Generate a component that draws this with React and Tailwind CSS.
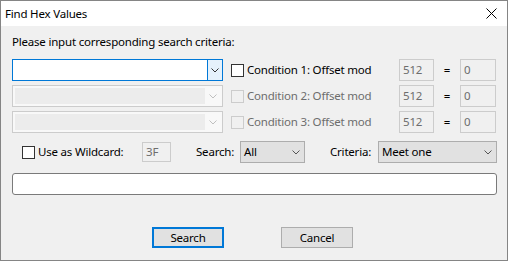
import React from 'react';

function Chevron({ color = '#333333' }) {
    return (
        <svg width="8" height="5" viewBox="0 0 8 5" fill="none">
            <polyline points="0.5,0.5 4,4 7.5,0.5" stroke={color} strokeWidth="1" />
        </svg>
    );
}

function Combo({ enabled }) {
    if (enabled) {
        return (
            <div className="flex h-[22px] w-[211px] border border-[#0078d7] bg-white">
                <div className="flex-1" />
                <div className="flex w-[15px] items-center justify-center border-l border-[#0078d7] bg-[#e5f1fb]">
                    <Chevron color="#333333" />
                </div>
            </div>
        );
    }
    return (
        <div className="flex h-[22px] w-[211px] border border-[#cccccc] bg-[#f8f8f8] p-[2px]">
            <div className="w-[190px] bg-[#ececec]" />
            <div className="flex flex-1 items-center justify-center">
                <Chevron color="#bfbfbf" />
            </div>
        </div>
    );
}

function Checkbox({ enabled }) {
    return (
        <div
            className={`h-[13px] w-[13px] border ${
                enabled ? 'border-[#333333] bg-white' : 'border-[#cccccc] bg-[#f0f0f0]'
            }`}
        />
    );
}

function ValueBox({ value, width }) {
    return (
        <div className={`flex h-[22px] ${width} items-center border border-[#cccccc] bg-[#f0f0f0] pl-[3px] text-[#6d6d6d]`}>
            {value}
        </div>
    );
}

function ConditionRow({ index, enabled }) {
    return (
        <div className="flex h-[22px] items-center">
            <Combo enabled={enabled} />
            <div className="ml-[8px]">
                <Checkbox enabled={enabled} />
            </div>
            <span className={`ml-[3px] w-[152px] ${enabled ? 'text-black' : 'text-[#6d6d6d]'}`}>
                Condition {index}: Offset mod
            </span>
            <ValueBox value="512" width="w-[35px]" />
            <span className="w-[26px] text-center text-black">=</span>
            <ValueBox value="0" width="w-[36px]" />
        </div>
    );
}

function Select({ value, width }) {
    return (
        <div className={`flex h-[22px] ${width} items-center border border-[#adadad] bg-[#e1e1e1] pl-[3px] pr-[4px]`}>
            <span className="flex-1">{value}</span>
            <Chevron color="#555555" />
        </div>
    );
}

export default function App() {
    return (
        <div className="flex h-[261px] w-[508px] flex-col border border-[#858585] font-['Noto_Sans',sans-serif] text-[11.5px] leading-[16px] tracking-[-0.2px] text-black">
            <div className="flex h-[25px] items-center bg-white pl-[4px] pr-[10px]">
                <span className="flex-1">Find Hex Values</span>
                <svg width="11" height="11" viewBox="0 0 11 11">
                    <line x1="0.5" y1="0.5" x2="10.5" y2="10.5" stroke="#000" strokeWidth="1" />
                    <line x1="10.5" y1="0.5" x2="0.5" y2="10.5" stroke="#000" strokeWidth="1" />
                </svg>
            </div>

            <div className="flex flex-1 flex-col bg-[#f0f0f0] pl-[11px]">
                <div className="mt-[8px] h-[16px]">Please input corresponding search criteria:</div>

                <div className="mt-[9px] flex flex-col gap-[4px]">
                    <ConditionRow index={1} enabled />
                    <ConditionRow index={2} />
                    <ConditionRow index={3} />
                </div>

                <div className="mt-[8px] flex h-[22px] items-center pl-[10px]">
                    <Checkbox enabled />
                    <span className="ml-[3px] w-[104px]">Use as Wildcard:</span>
                    <div className="flex h-[20px] w-[29px] items-center border border-[#cccccc] bg-[#f0f0f0] pl-[3px] text-[#6d6d6d]">
                        3F
                    </div>
                    <span className="ml-[25px] w-[44px]">Search:</span>
                    <Select value="All" width="w-[65px]" />
                    <span className="ml-[25px] w-[48px]">Criteria:</span>
                    <Select value="Meet one" width="w-[119px]" />
                </div>

                <div className="mt-[10px] h-[22px] w-[485px] rounded-[3px] border border-[#7a7a7a] bg-white" />

                <div className="mt-[32px] flex pl-[140px]">
                    <button
                        type="button"
                        className="flex h-[21px] w-[72px] items-center justify-center border-2 border-[#0078d7] bg-[#e1e1e1]"
                    >
                        Search
                    </button>
                    <button
                        type="button"
                        className="ml-[57px] flex h-[21px] w-[72px] items-center justify-center border border-[#adadad] bg-[#e1e1e1]"
                    >
                        Cancel
                    </button>
                </div>
            </div>
        </div>
    );
}
